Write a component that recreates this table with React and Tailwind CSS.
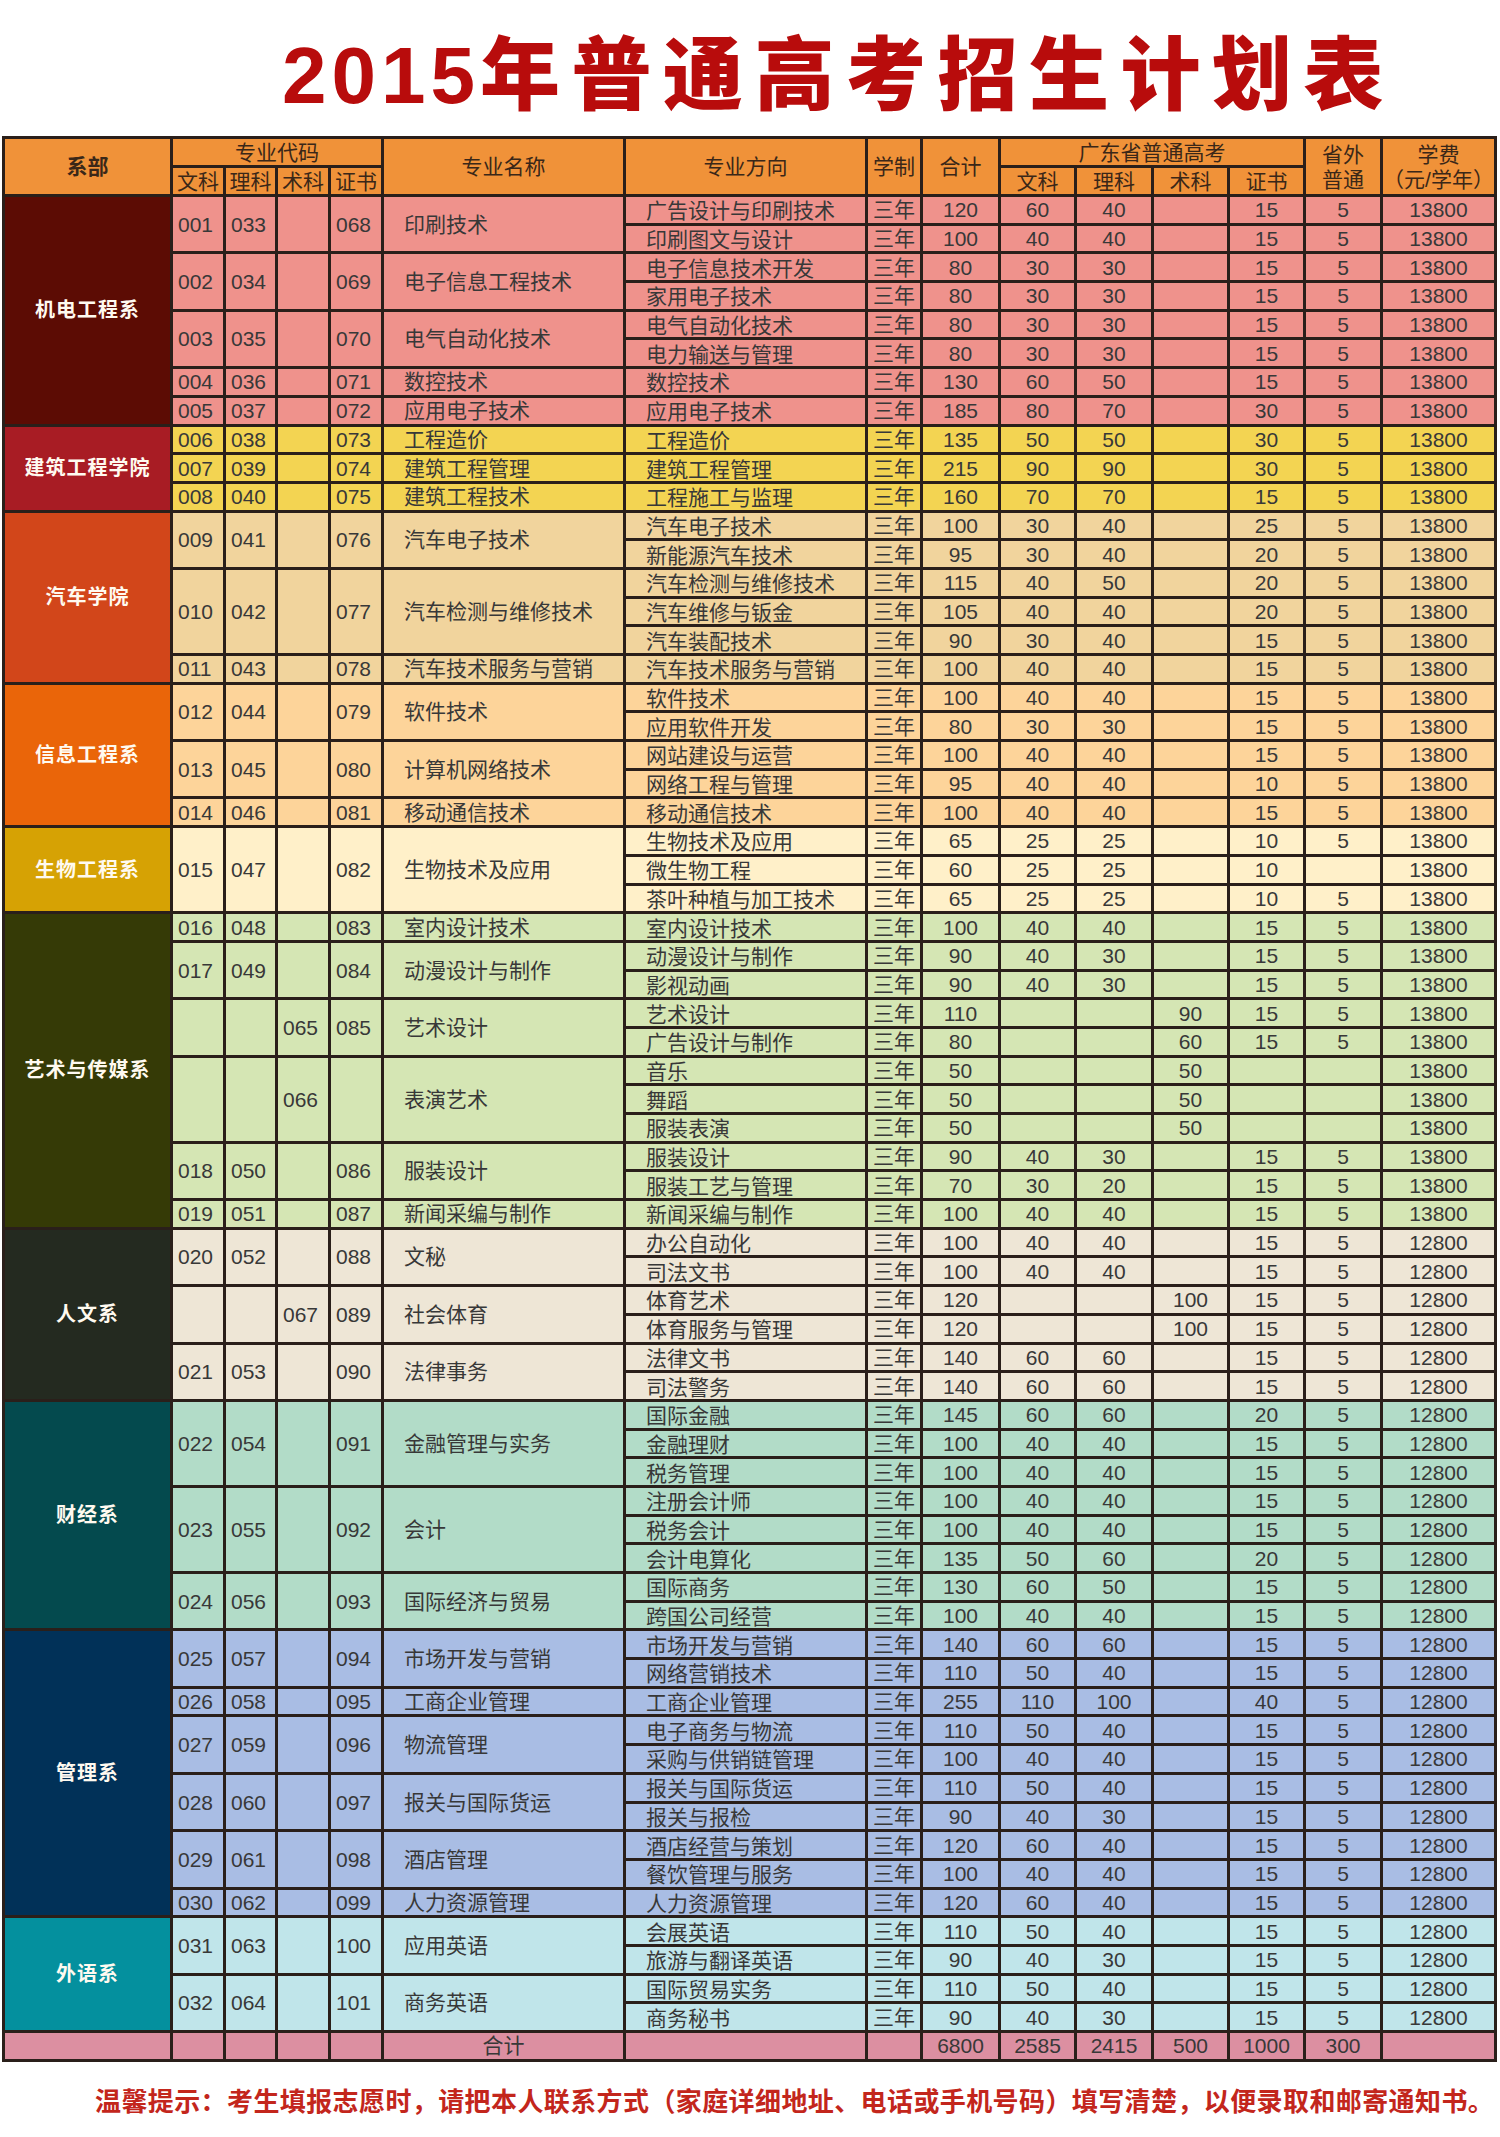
import React from "react";

const D = [
  { name: "机电工程系", dc: "bg-[#5c0c04]", rc: "bg-[#ef928c]", fee: "13800", majors: [
    ["001","033","","068","印刷技术",[["广告设计与印刷技术","120","60","40","","15","5"],["印刷图文与设计","100","40","40","","15","5"]]],
    ["002","034","","069","电子信息工程技术",[["电子信息技术开发","80","30","30","","15","5"],["家用电子技术","80","30","30","","15","5"]]],
    ["003","035","","070","电气自动化技术",[["电气自动化技术","80","30","30","","15","5"],["电力输送与管理","80","30","30","","15","5"]]],
    ["004","036","","071","数控技术",[["数控技术","130","60","50","","15","5"]]],
    ["005","037","","072","应用电子技术",[["应用电子技术","185","80","70","","30","5"]]],
  ]},
  { name: "建筑工程学院", dc: "bg-[#a81c24]", rc: "bg-[#f3d452]", fee: "13800", majors: [
    ["006","038","","073","工程造价",[["工程造价","135","50","50","","30","5"]]],
    ["007","039","","074","建筑工程管理",[["建筑工程管理","215","90","90","","30","5"]]],
    ["008","040","","075","建筑工程技术",[["工程施工与监理","160","70","70","","15","5"]]],
  ]},
  { name: "汽车学院", dc: "bg-[#d2461a]", rc: "bg-[#f1d49d]", fee: "13800", majors: [
    ["009","041","","076","汽车电子技术",[["汽车电子技术","100","30","40","","25","5"],["新能源汽车技术","95","30","40","","20","5"]]],
    ["010","042","","077","汽车检测与维修技术",[["汽车检测与维修技术","115","40","50","","20","5"],["汽车维修与钣金","105","40","40","","20","5"],["汽车装配技术","90","30","40","","15","5"]]],
    ["011","043","","078","汽车技术服务与营销",[["汽车技术服务与营销","100","40","40","","15","5"]]],
  ]},
  { name: "信息工程系", dc: "bg-[#ea6509]", rc: "bg-[#fdd49a]", fee: "13800", majors: [
    ["012","044","","079","软件技术",[["软件技术","100","40","40","","15","5"],["应用软件开发","80","30","30","","15","5"]]],
    ["013","045","","080","计算机网络技术",[["网站建设与运营","100","40","40","","15","5"],["网络工程与管理","95","40","40","","10","5"]]],
    ["014","046","","081","移动通信技术",[["移动通信技术","100","40","40","","15","5"]]],
  ]},
  { name: "生物工程系", dc: "bg-[#d6a204]", rc: "bg-[#fff0c9]", fee: "13800", majors: [
    ["015","047","","082","生物技术及应用",[["生物技术及应用","65","25","25","","10","5"],["微生物工程","60","25","25","","10",""],["茶叶种植与加工技术","65","25","25","","10","5"]]],
  ]},
  { name: "艺术与传媒系", dc: "bg-[#353a06]", rc: "bg-[#d5e6b4]", fee: "13800", majors: [
    ["016","048","","083","室内设计技术",[["室内设计技术","100","40","40","","15","5"]]],
    ["017","049","","084","动漫设计与制作",[["动漫设计与制作","90","40","30","","15","5"],["影视动画","90","40","30","","15","5"]]],
    ["","","065","085","艺术设计",[["艺术设计","110","","","90","15","5"],["广告设计与制作","80","","","60","15","5"]]],
    ["","","066","","表演艺术",[["音乐","50","","","50","",""],["舞蹈","50","","","50","",""],["服装表演","50","","","50","",""]]],
    ["018","050","","086","服装设计",[["服装设计","90","40","30","","15","5"],["服装工艺与管理","70","30","20","","15","5"]]],
    ["019","051","","087","新闻采编与制作",[["新闻采编与制作","100","40","40","","15","5"]]],
  ]},
  { name: "人文系", dc: "bg-[#242a20]", rc: "bg-[#eee6d6]", fee: "12800", majors: [
    ["020","052","","088","文秘",[["办公自动化","100","40","40","","15","5"],["司法文书","100","40","40","","15","5"]]],
    ["","","067","089","社会体育",[["体育艺术","120","","","100","15","5"],["体育服务与管理","120","","","100","15","5"]]],
    ["021","053","","090","法律事务",[["法律文书","140","60","60","","15","5"],["司法警务","140","60","60","","15","5"]]],
  ]},
  { name: "财经系", dc: "bg-[#044a4e]", rc: "bg-[#b2dcc8]", fee: "12800", majors: [
    ["022","054","","091","金融管理与实务",[["国际金融","145","60","60","","20","5"],["金融理财","100","40","40","","15","5"],["税务管理","100","40","40","","15","5"]]],
    ["023","055","","092","会计",[["注册会计师","100","40","40","","15","5"],["税务会计","100","40","40","","15","5"],["会计电算化","135","50","60","","20","5"]]],
    ["024","056","","093","国际经济与贸易",[["国际商务","130","60","50","","15","5"],["跨国公司经营","100","40","40","","15","5"]]],
  ]},
  { name: "管理系", dc: "bg-[#013158]", rc: "bg-[#a9bde4]", fee: "12800", majors: [
    ["025","057","","094","市场开发与营销",[["市场开发与营销","140","60","60","","15","5"],["网络营销技术","110","50","40","","15","5"]]],
    ["026","058","","095","工商企业管理",[["工商企业管理","255","110","100","","40","5"]]],
    ["027","059","","096","物流管理",[["电子商务与物流","110","50","40","","15","5"],["采购与供销链管理","100","40","40","","15","5"]]],
    ["028","060","","097","报关与国际货运",[["报关与国际货运","110","50","40","","15","5"],["报关与报检","90","40","30","","15","5"]]],
    ["029","061","","098","酒店管理",[["酒店经营与策划","120","60","40","","15","5"],["餐饮管理与服务","100","40","40","","15","5"]]],
    ["030","062","","099","人力资源管理",[["人力资源管理","120","60","40","","15","5"]]],
  ]},
  { name: "外语系", dc: "bg-[#04909e]", rc: "bg-[#c0e5ea]", fee: "12800", majors: [
    ["031","063","","100","应用英语",[["会展英语","110","50","40","","15","5"],["旅游与翻译英语","90","40","30","","15","5"]]],
    ["032","064","","101","商务英语",[["国际贸易实务","110","50","40","","15","5"],["商务秘书","90","40","30","","15","5"]]],
  ]},
];

function Cell({ r, rs = 1, c, cs = 1, cls = "", children }) {
  return (
    <div
      className={"flex items-center overflow-hidden whitespace-nowrap " + cls}
      style={{ gridRow: `${r} / span ${rs}`, gridColumn: `${c} / span ${cs}` }}
    >
      {children}
    </div>
  );
}

const H = "bg-[#f09239] justify-center text-[#3a2718]";

function Header() {
  return (
    <>
      <Cell r={1} rs={2} c={1} cls={H + " font-bold"}>系部</Cell>
      <Cell r={1} c={2} cs={4} cls={H}>专业代码</Cell>
      <Cell r={2} c={2} cls={H}>文科</Cell>
      <Cell r={2} c={3} cls={H}>理科</Cell>
      <Cell r={2} c={4} cls={H}>术科</Cell>
      <Cell r={2} c={5} cls={H}>证书</Cell>
      <Cell r={1} rs={2} c={6} cls={H}>专业名称</Cell>
      <Cell r={1} rs={2} c={7} cls={H}>专业方向</Cell>
      <Cell r={1} rs={2} c={8} cls={H}>学制</Cell>
      <Cell r={1} rs={2} c={9} cls={H}>合计</Cell>
      <Cell r={1} c={10} cs={4} cls={H}>广东省普通高考</Cell>
      <Cell r={2} c={10} cls={H}>文科</Cell>
      <Cell r={2} c={11} cls={H}>理科</Cell>
      <Cell r={2} c={12} cls={H}>术科</Cell>
      <Cell r={2} c={13} cls={H}>证书</Cell>
      <Cell r={1} rs={2} c={14} cls={H + " flex-col leading-[25px]"}>
        <span>省外</span>
        <span>普通</span>
      </Cell>
      <Cell r={1} rs={2} c={15} cls={H + " flex-col leading-[25px]"}>
        <span>学费</span>
        <span>（元/学年）</span>
      </Cell>
    </>
  );
}

function Body() {
  const out = [];
  let r = 3;
  D.forEach((d, di) => {
    const total = d.majors.reduce((s, m) => s + m[5].length, 0);
    out.push(
      <Cell key={"d" + di} r={r} rs={total} c={1} cls={d.dc + " justify-center text-[#fffaf0] font-bold text-[20px] tracking-[1px]"}>
        {d.name}
      </Cell>
    );
    d.majors.forEach((m, mi) => {
      const n = m[5].length;
      const k = di + "-" + mi;
      for (let c = 0; c < 4; c++) {
        out.push(
          <Cell key={k + "c" + c} r={r} rs={n} c={2 + c} cls={d.rc + " pl-[5px]"}>
            {m[c]}
          </Cell>
        );
      }
      out.push(
        <Cell key={k + "n"} r={r} rs={n} c={6} cls={d.rc + " pl-[20px]"}>
          {m[4]}
        </Cell>
      );
      m[5].forEach((row, ri) => {
        const rr = r + ri;
        out.push(
          <Cell key={k + "r" + ri + "a"} r={rr} c={7} cls={d.rc + " pl-[20px] pt-[2px]"}>{row[0]}</Cell>,
          <Cell key={k + "r" + ri + "b"} r={rr} c={8} cls={d.rc + " justify-center"}>三年</Cell>
        );
        for (let j = 1; j <= 6; j++) {
          out.push(
            <Cell key={k + "r" + ri + "v" + j} r={rr} c={8 + j} cls={d.rc + " justify-center"}>
              {row[j]}
            </Cell>
          );
        }
        out.push(
          <Cell key={k + "r" + ri + "f"} r={rr} c={15} cls={d.rc + " justify-center"}>{d.fee}</Cell>
        );
      });
      r += n;
    });
  });
  const T = "bg-[#dc8fa1] justify-center";
  const tot = ["", "", "", "", "", "合计", "", "", "6800", "2585", "2415", "500", "1000", "300", ""];
  tot.forEach((t, i) => {
    out.push(
      <Cell key={"t" + i} r={r} c={i + 1} cls={T}>{t}</Cell>
    );
  });
  return out;
}

export default function App() {
  return (
    <div className="w-[1500px] h-[2137px] bg-white font-['Liberation_Sans','Noto_Sans_CJK_SC',sans-serif]">
      <div className="h-[136px] pt-[28px] pl-[282px] flex items-baseline text-[#b80c0c]">
        <span className="font-['Liberation_Sans'] font-bold text-[80px] leading-[80px] tracking-[5px]">2015</span>
        <span className="font-['Noto_Sans_CJK_SC',sans-serif] font-black text-[80px] leading-[80px] tracking-[11.5px]">年普通高考招生计划表</span>
      </div>
      <div className="ml-[2px] inline-grid gap-[3px] p-[3px] bg-[#2a1f1a] text-[21px] leading-none text-[#383838] grid-cols-[165px_50px_49px_50px_50px_239px_239px_52px_75px_73px_74px_73px_73px_74px_111px] grid-rows-[26px_26px_repeat(65,25.7px)]">
        <Header />
        <Body />
      </div>
      <div className="pl-[95px] pt-[20px] text-[26px] leading-[36px] font-bold tracking-[0.4px] text-[#c3261c] font-['Noto_Sans_CJK_SC',sans-serif] whitespace-nowrap">
        温馨提示：考生填报志愿时，请把本人联系方式（家庭详细地址、电话或手机号码）填写清楚，以便录取和邮寄通知书。
      </div>
    </div>
  );
}
